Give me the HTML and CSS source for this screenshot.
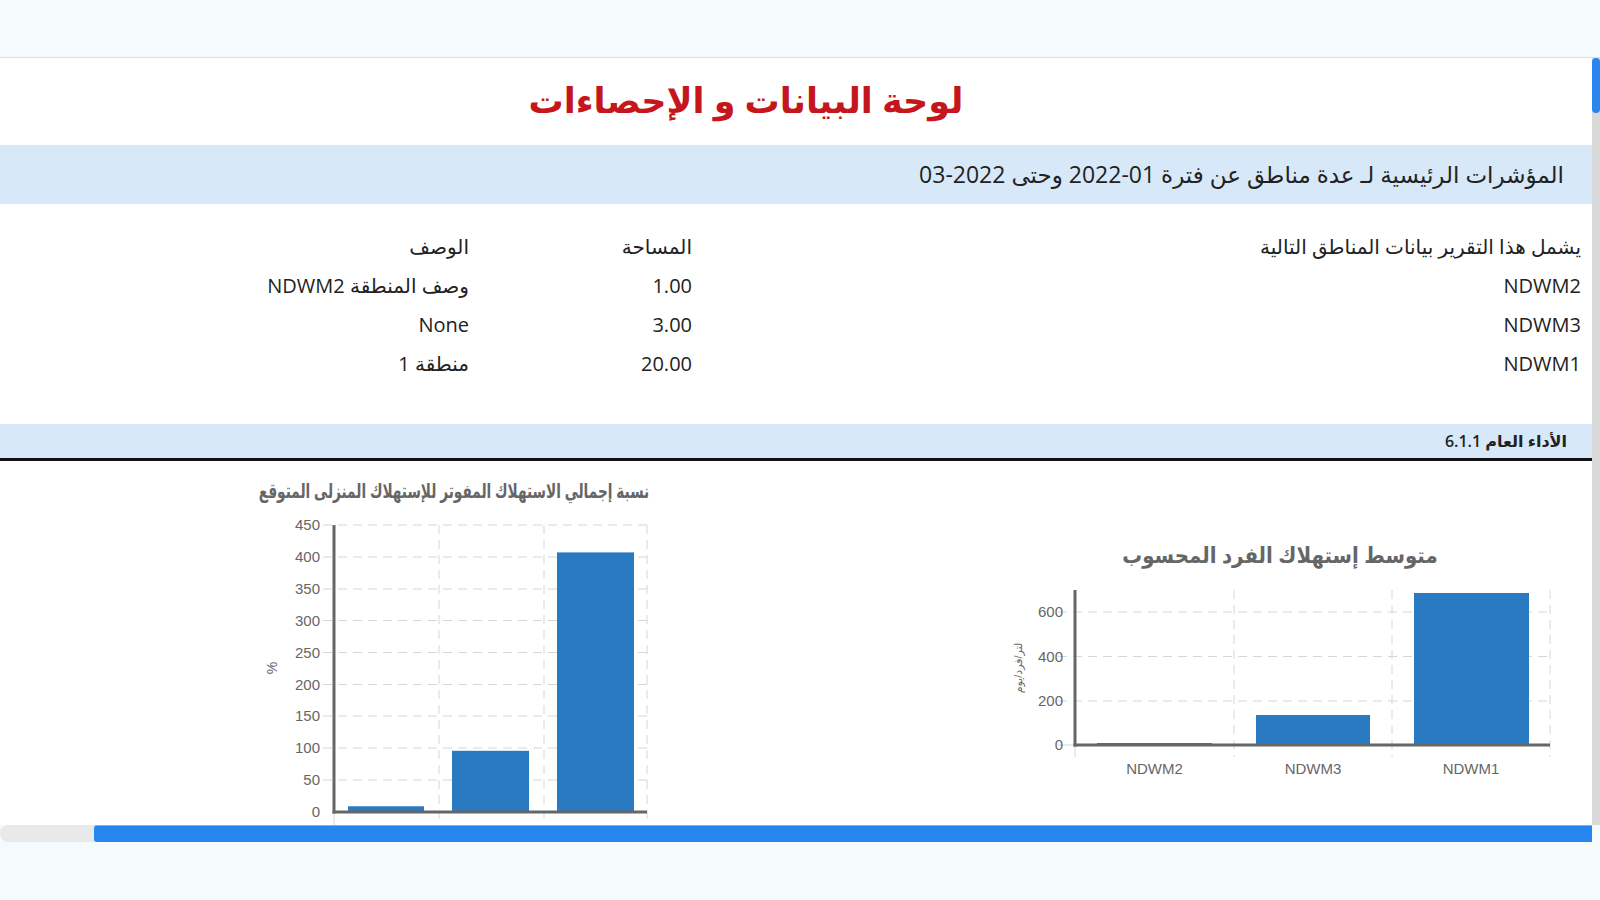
FILE: index.html
```html
<!DOCTYPE html>
<html lang="ar">
<head>
<meta charset="utf-8">
<title>لوحة البيانات و الإحصاءات</title>
<link rel="stylesheet" href="styles.css">
</head>
<body>
  <header class="topbar"></header>

  <section class="panel">
    <main class="content" dir="rtl">
      <h1 class="page-title">لوحة البيانات و الإحصاءات</h1>

      <div class="band band-main">المؤشرات الرئيسية لـ عدة مناطق عن فترة <span dir="ltr">2022-01</span> وحتى <span dir="ltr">03-2022</span></div>

      <div class="regions">
        <div class="cell">يشمل هذا التقرير بيانات المناطق التالية</div>
        <div class="cell">المساحة</div>
        <div class="cell">الوصف</div>

        <div class="cell">NDWM2</div>
        <div class="cell">1.00</div>
        <div class="cell">وصف المنطقة NDWM2</div>

        <div class="cell">NDWM3</div>
        <div class="cell">3.00</div>
        <div class="cell">None</div>

        <div class="cell">NDWM1</div>
        <div class="cell">20.00</div>
        <div class="cell">منطقة 1</div>
      </div>

      <div class="band band-section">الأداء العام 6.1.1</div>

      <div class="charts" dir="ltr">
        <div class="chart-slot chart-slot-left">
          <svg class="chart chart-ratio" width="796" height="380" viewBox="0 0 796 380">
            <g transform="translate(240 0)">
              <!-- condensed title, squeezed horizontally like the chart library's narrow face -->
              <text class="chart-title" transform="translate(214 37) scale(0.684 1)" text-anchor="middle">نسبة إجمالي الاستهلاك المفوتر للإستهلاك المنزلى المتوقع</text>
              <g class="grid">
                <line x1="83" y1="64" x2="407" y2="64"/>
                <line x1="83" y1="96" x2="407" y2="96"/>
                <line x1="83" y1="128" x2="407" y2="128"/>
                <line x1="83" y1="159.5" x2="407" y2="159.5"/>
                <line x1="83" y1="191.5" x2="407" y2="191.5"/>
                <line x1="83" y1="223.5" x2="407" y2="223.5"/>
                <line x1="83" y1="255" x2="407" y2="255"/>
                <line x1="83" y1="287" x2="407" y2="287"/>
                <line x1="83" y1="319" x2="407" y2="319"/>
                <line x1="199" y1="64" x2="199" y2="366"/>
                <line x1="304" y1="64" x2="304" y2="366"/>
                <line x1="407" y1="64" x2="407" y2="366"/>
              </g>
              <line class="tick" x1="94" y1="351" x2="94" y2="366"/>
              <g class="ticks-y" text-anchor="end">
                <text x="80" y="69">450</text>
                <text x="80" y="101">400</text>
                <text x="80" y="133">350</text>
                <text x="80" y="164.5">300</text>
                <text x="80" y="196.5">250</text>
                <text x="80" y="228.5">200</text>
                <text x="80" y="260">150</text>
                <text x="80" y="292">100</text>
                <text x="80" y="324">50</text>
                <text x="80" y="356">0</text>
              </g>
              <text class="axis-label" transform="translate(37 207) rotate(-90)" text-anchor="middle">%</text>
              <g class="bars">
                <rect x="108" y="345.3" width="76" height="5.7"/>
                <rect x="212" y="289.8" width="77" height="61.2"/>
                <rect x="317" y="91.4" width="77" height="259.6"/>
              </g>
              <line class="axis" x1="94" y1="64" x2="94" y2="352.5"/>
              <line class="axis" x1="92.5" y1="351" x2="407" y2="351"/>
            </g>
          </svg>
        </div>

        <div class="chart-slot chart-slot-right">
          <svg class="chart chart-avg" width="796" height="380" viewBox="0 0 796 380">
            <g transform="translate(194 0)">
              <text class="chart-title chart-title-lg" transform="translate(290 102) scale(0.9 1)" text-anchor="middle">متوسط إستهلاك الفرد المحسوب</text>
              <g class="grid">
                <line x1="68" y1="151" x2="560" y2="151"/>
                <line x1="68" y1="195.5" x2="560" y2="195.5"/>
                <line x1="68" y1="240" x2="560" y2="240"/>
                <line x1="244" y1="129" x2="244" y2="296"/>
                <line x1="402" y1="129" x2="402" y2="296"/>
                <line x1="560" y1="129" x2="560" y2="296"/>
              </g>
              <line class="tick" x1="85" y1="284" x2="85" y2="296"/>
              <line class="tick" x1="68" y1="284" x2="85" y2="284"/>
              <g class="ticks-y" text-anchor="end">
                <text x="73" y="156">600</text>
                <text x="73" y="200.5">400</text>
                <text x="73" y="245">200</text>
                <text x="73" y="289">0</text>
              </g>
              <text class="axis-label axis-label-sm" transform="translate(32 207) rotate(-90)" text-anchor="middle">لتر/فرد/يوم</text>
              <g class="bars">
                <rect x="107" y="282" width="115" height="2"/>
                <rect x="266" y="254" width="114" height="30"/>
                <rect x="424" y="132" width="115" height="152"/>
              </g>
              <line class="axis" x1="85" y1="129" x2="85" y2="285.5"/>
              <line class="axis" x1="83.5" y1="284" x2="560" y2="284"/>
              <g class="ticks-x" text-anchor="middle">
                <text x="164.5" y="313">NDWM2</text>
                <text x="323" y="313">NDWM3</text>
                <text x="481" y="313">NDWM1</text>
              </g>
            </g>
          </svg>
        </div>
      </div>
    </main>

    <div class="vscroll"><div class="vscroll-thumb"></div></div>
    <div class="hscroll"><div class="hscroll-thumb"></div></div>
    <div class="scroll-corner"></div>
  </section>
</body>
</html>
```

FILE: styles.css
```css
html, body {
  margin: 0;
  padding: 0;
}

body {
  background: #f5fbfc;
  font-family: "Open Sans", "DejaVu Sans", sans-serif;
  color: #212529;
  width: 1600px;
  height: 900px;
  overflow: hidden;
}

.topbar {
  height: 57px;
}

/* white report panel with its own scrollbars */
.panel {
  display: grid;
  grid-template-columns: 1592px 8px;
  grid-template-rows: 767px 17px;
  border-top: 1px solid #dcdfe1;
}

.content {
  background: #fff;
  overflow: hidden;
}

.page-title {
  margin: 0;
  height: 87px;
  box-sizing: border-box;
  padding: 16px 100px 0 0;
  text-align: center;
  font-size: 35px;
  font-weight: bold;
  color: #c4161c;
  line-height: 52px;
}

.band {
  background: #d7e9f8;
  color: #222;
}

.band-main {
  height: 59px;
  line-height: 59px;
  padding-right: 28px;
  font-size: 23px;
}

.regions {
  display: grid;
  grid-template-columns: 889px 223px 480px;
  grid-auto-rows: 39px;
  padding: 23px 0 41px;
  font-size: 20px;
  color: #222;
}

.regions .cell {
  padding-right: 11px;
  line-height: 39px;
  white-space: nowrap;
}

.band-section {
  height: 34px;
  line-height: 34px;
  padding-right: 25px;
  font-size: 16px;
  font-weight: 600;
  border-bottom: 3px solid #111;
}

.charts {
  display: grid;
  grid-template-columns: 796px 796px;
}

.chart {
  display: block;
}

.chart text {
  font-family: "Liberation Sans", "DejaVu Sans", sans-serif;
  fill: #666;
}

.chart-title {
  font-size: 20px;
  font-weight: bold;
}

.chart-title-lg {
  font-size: 22px;
}

.ticks-y text,
.ticks-x text {
  font-size: 15px;
}

.axis-label {
  font-size: 14px;
}

.axis-label-sm {
  font-size: 11px;
}

.grid line {
  stroke: #d6d6d6;
  stroke-width: 1;
  stroke-dasharray: 9 6;
}

.tick {
  stroke: #d6d6d6;
  stroke-width: 1;
}

.axis {
  stroke: #666;
  stroke-width: 3;
}

.bars rect {
  fill: #2a7ac2;
}

/* scrollbars */
.vscroll {
  background: #d9d9d9;
}

.vscroll-thumb {
  height: 55px;
  background: #2a86ee;
  border-radius: 4px;
}

.hscroll {
  background: #e9e9e9;
  border-radius: 8px 0 0 8px;
  display: flex;
  justify-content: flex-end;
}

.hscroll-thumb {
  width: 1498px;
  height: 100%;
  background: #2586f0;
  border-top: 1px solid #6fb0f7;
  box-sizing: border-box;
  border-radius: 3px 0 0 3px;
}

.scroll-corner {
  background: #f5fbfc;
}
```
